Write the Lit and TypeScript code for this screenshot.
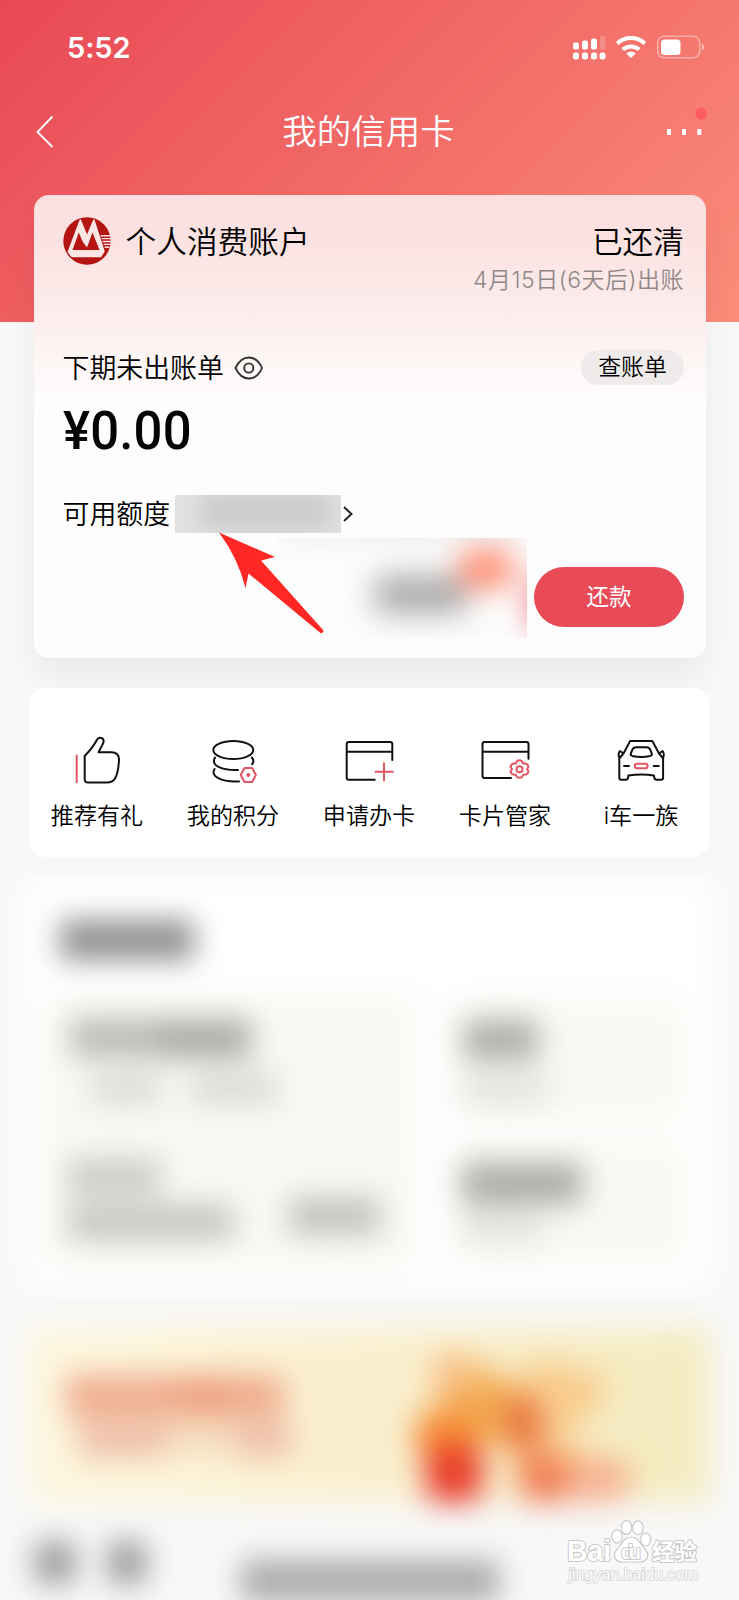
import { LitElement, html, css, svg } from 'lit';
import { customElement, property } from 'lit/decorators.js';

const thumb = svg`
  <path class="r" d="M9.700 25.500V52.300"/>
  <path d="M17.700 26V49q0 3.600 3.600 3.600H40c7.500 0 11-5.500 12-22.400.300-5.400-2.600-8-7.600-8H31.500L36.300 13c1.500-5.600-4.400-6.800-6.500-3C27 15.500 23 20.500 17.700 26z"/>`;
const coins = svg`
  <ellipse cx="30.300" cy="20" rx="20" ry="9.100"/>
  <path d="M12 27.500C7 36 20 40.600 35 40M48.800 27.500C51 30 51 32 49 34.300M11.600 39C7 46 18 52.500 36 51.400"/>
  <path class="r" d="M37.700 45l3.800-6.900h7.600l3.800 6.900-3.800 6.900h-7.600z"/>
  <circle class="rf" cx="45.300" cy="45" r="2"/>`;
const apply = svg`
  <path d="M35.700 49.700H9.700a2 2 0 0 1-2-2V14a2 2 0 0 1 2-2H51.300a2 2 0 0 1 2 2V30M7.700 21.700H53.300"/>
  <path class="r" d="M36.500 41.700h17.300M45 33.300v17.300"/>`;
const manage = svg`
  <path d="M36 48H9.500a2 2 0 0 1-2-2V14a2 2 0 0 1 2-2H51.500a2 2 0 0 1 2 2V28.800M7.500 21.700H53.500"/>
  <path class="r" d="M42 31.200q2.500-1.800 5 0l1.200 2.300 2.600.1q2.600 1 2.600 3.600l-1.400 1.800 1.400 2q0 2.600-2.600 3.600l-2.600.1L47 47q-2.500 1.600-5 0l-1.200-2.300-2.600-.1q-2.600-1-2.600-3.600l1.400-2-1.400-1.800q0-2.600 2.600-3.600l2.600-.1z"/>
  <circle class="r" cx="44.500" cy="39.200" r="3"/>`;
const car = svg`
  <path d="M8.300 27.500V47.700q0 2 2 2h4.500q2 0 2.300-2l.3-2.200q13-2 25.600 0l.3 2.200q.3 2 2.300 2h4.500q2 0 2-2V27.500M8.300 27.500q-1.500-3.500.2-6M52.100 27.500q1.500-3.500-.2-6M9 21l3.500 2.500L19.200 10.900H41.300L48 23.500 51.500 21M8.600 28l3.900-4.500M51.800 28L48 23.500"/>
  <path d="M25.500 17.300H35.500q2.800 0 3.700 2.300l1.600 4q.5 1.700-1.500 2.300-9 2-18 0-2-.6-1.500-2.300l1.600-4q.9-2.300 4.100-2.300z"/>
  <path d="M13 36h5M42.700 36h5"/>
  <rect class="r" x="23.800" y="33.800" width="12.800" height="4.400" rx="2.200"/>`;

@customElement('menu-item')
class MenuItem extends LitElement {
  @property() label = '';
  @property({ attribute: false }) icon: unknown;
  static styles = css`
    :host { display: flex; flex-direction: column; align-items: center; width: 136px; }
    svg { width: 60px; height: 60px; fill: none; stroke: #111; stroke-width: 2; stroke-linecap: round; stroke-linejoin: round; }
    .r { stroke: #e35563; }
    .rf { fill: #e35563; stroke: none; }
    .label { margin-top: 9px; font-size: 23.100px; line-height: 34px; color: #000; white-space: nowrap; }
  `;
  render() {
    return html`<svg viewBox="0 0 60 60">${this.icon}</svg><span class="label">${this.label}</span>`;
  }
}

@customElement('app-root')
class AppRoot extends LitElement {
  static styles = css`
    :host {
      display: block; position: relative; width: 739px; height: 1600px; overflow: hidden;
      background: linear-gradient(135deg, #e84855 0%, #f26c68 52%, #fb8c79 100%) 0 0 / 739px 322px no-repeat, #f8f8f8;
      font-family: "Inter", "Noto Sans CJK SC", sans-serif; font-weight: 350; color: #000;
    }
    * { box-sizing: border-box; }
    svg { display: block; overflow: visible; }
    filter { color-interpolation-filters: sRGB; }
    .status { height: 94px; padding: 0 35px 0 67px; display: flex; justify-content: space-between; align-items: center; }
    .time { color: #fff; font-size: 29px; font-weight: 600; letter-spacing: -.1px; line-height: 40px; padding-top: 2px; }
    .nav { height: 75px; padding: 0 32px 0 36px; display: grid; grid-template-columns: 60px 1fr 60px; align-items: center; }
    .title { text-align: center; color: #fff; font-size: 34.500px; line-height: 50px; padding-right: 6px; }
    .card {
      margin: 26px 33px 0 33.500px; height: 463px; border-radius: 15px; padding: 21px 22px 19px 29px;
      background: linear-gradient(180deg, #fbdfdf 0, #fbe3e2 50px, #fcefee 130px, #fdf8f7 175px, #fdfdfd 215px);
      box-shadow: 0 20px 32px rgba(0, 0, 0, .055); display: flex; flex-direction: column;
    }
    .card > * { flex-shrink: 0; }
    .head { display: flex; align-items: flex-start; height: 107px; }
    .name { margin-left: 14px; font-size: 30.700px; line-height: 52px; flex: 1; }
    .state { display: flex; flex-direction: column; align-items: flex-end; }
    .paid { font-size: 30.700px; line-height: 51px; }
    .due { font-size: 23px; line-height: 26px; color: #8f8888; letter-spacing: .5px; }
    .row { display: flex; align-items: center; }
    .bill { margin-top: 26px; height: 38px; justify-content: space-between; font-size: 26.900px; line-height: 38px; }
    .bill .row { gap: 10px; }
    .check { width: 103px; height: 35px; border-radius: 18px; background: #efebeb; font-size: 22.900px; line-height: 34px; text-align: center; margin-top: -1px; }
    .amount { margin-top: 13px; height: 62px; font: 500 53.500px/62px Roboto, sans-serif; color: #050505; transform: scaleX(.95); transform-origin: 0 0; letter-spacing: .2px; }
    .limit { margin-top: 33px; height: 38px; font-size: 26.900px; line-height: 38px; }
    .limit span { margin-top: -1px; }
    .mask { width: 166px; height: 38px; margin: 0 2px 0 5px; background: #e2e2e2; overflow: hidden; }
    .actions { margin-top: 5px; height: 100px; display: flex; justify-content: flex-end; gap: 7px; }
    .offer { width: 250px; height: 100px; overflow: hidden; }
    .pay { width: 150px; height: 60px; margin-top: 29px; border-radius: 30px; background: #e84a56; color: #fff; font-size: 22.500px; line-height: 59px; text-align: center; font-weight: 400; }
    .menu { margin: 30px 30px 0 29px; height: 169px; border-radius: 16px; background: #fff; display: flex; padding-top: 42px; position: relative; }
    .panel { margin-top: 17px; height: 426px; overflow: hidden; }
    .banner { height: 227px; }
    .arrow { position: absolute; left: 215px; top: 530px; }
    .mark { position: absolute; left: 560px; top: 1515px; }
    .mark text { fill: #fff; stroke: #c9c9c9; stroke-width: 2px; paint-order: stroke; stroke-linejoin: round; }
    .mark .url { stroke-width: 1.500px; stroke: #d0d0d0; }
    .mark .paw { fill: #fff; stroke: #c9c9c9; stroke-width: 1.200px; }
  `;

  render() {
    return html`
      <div class="status">
        <span class="time">5:52</span>
        <svg width="132" height="26" viewBox="572 33.500 132 26" fill="#fff">
          <rect x="573" y="42" width="6" height="7" rx="2"/><rect x="582" y="40" width="6" height="9" rx="2"/>
          <rect x="591" y="38" width="6" height="11" rx="2"/><rect x="600" y="35" width="5.500" height="14" rx="2" opacity=".2"/>
          <rect x="573" y="52" width="6" height="7" rx="2.300"/><rect x="582" y="52" width="6" height="7" rx="2.300"/>
          <rect x="591" y="52" width="6" height="7" rx="2.300"/><rect x="599.500" y="52" width="6" height="7" rx="2.300"/>
          <g fill="none" stroke="#fff" stroke-width="4">
            <path d="M617.200 43a20.300 20.300 0 0 1 27.600 0"/><path d="M622.800 49a12.400 12.400 0 0 1 16.400 0"/>
          </g>
          <path d="M631 57.500l-4.700-4.600q4.700-3.600 9.400 0z"/>
          <rect x="657.700" y="35.800" width="42" height="21.500" rx="6.500" fill="none" stroke="#fff" stroke-width="1.600" opacity=".4"/>
          <rect x="661" y="39" width="19.500" height="15.500" rx="3.500"/>
          <path d="M702 43q2.300 1 2.300 3.500t-2.300 3.500z" opacity=".5"/>
        </svg>
      </div>
      <div class="nav">
        <svg width="20" height="34" viewBox="0 0 20 34" fill="none" stroke="#fff" stroke-width="1.800"><path d="M16.500 1.500L1.500 17 16.500 32"/></svg>
        <div class="title">我的信用卡</div>
        <svg width="60" height="40" viewBox="647 112 60 40" fill="#fff">
          <rect x="667" y="129" width="4" height="6"/><rect x="682" y="129" width="4" height="6"/><rect x="697.300" y="129" width="4" height="6"/>
          <circle cx="701.300" cy="113.700" r="6" fill="#fe5d62"/>
        </svg>
      </div>

      <div class="card">
        <div class="head">
          <svg width="49" height="48" viewBox="0 0 49 48">
            <circle cx="24" cy="25" r="23.700" fill="#b41513"/>
            <path fill="#fbe5e5" d="M16.700 3.500h1.200L24 18.500 30.300 3.500h1.200L41.800 35.500 38 41.300H8.500L4.500 36z"/>
            <path fill="#b41513" d="M15.800 16.500L23.200 34H9.500zM29.500 16.500L36.500 34H23.200L19.800 25.700 24 31.500z"/>
            <path stroke="#fbe5e5" stroke-width="1.400" d="M37.500 19.700H47M38.500 22.600H48M39.500 25.500H48M40.600 28.400H47.500M41.600 31.300H46.500"/>
          </svg>
          <span class="name">个人消费账户</span>
          <div class="state"><span class="paid">已还清</span><span class="due">4月15日(6天后)出账</span></div>
        </div>
        <div class="row bill">
          <div class="row">
            <span>下期未出账单</span>
            <svg width="30" height="24" viewBox="0 0 30 24" fill="none" stroke="#333" stroke-width="1.900">
              <path d="M1.500 12C8-2 22-2 28 12 22 26 8 26 1.500 12z"/><circle cx="14.800" cy="12" r="4.600"/>
            </svg>
          </div>
          <div class="check">查账单</div>
        </div>
        <div class="amount">¥0.00</div>
        <div class="row limit">
          <span>可用额度</span>
          <div class="mask">
            <svg width="166" height="38"><filter id="m" filterUnits="userSpaceOnUse" x="-60" y="-80" width="290" height="200"><feGaussianBlur stdDeviation="12"/></filter>
              <rect x="26" y="-2" width="130" height="36" fill="#c9c9c9" filter="url(#m)"/></svg>
          </div>
          <svg width="10" height="18" viewBox="0 0 10 18" fill="none" stroke="#222" stroke-width="2"><path d="M1 2l7.500 7L1 16"/></svg>
        </div>
        <div class="actions">
          <div class="offer">
            <svg width="250" height="100">
              <filter id="o" filterUnits="userSpaceOnUse" x="-60" y="-60" width="370" height="220"><feGaussianBlur stdDeviation="15"/></filter>
              <rect width="250" height="100" fill="#fbfbfb" opacity=".5"/>
              <g filter="url(#o)">
                <rect x="98" y="38" width="92" height="37" rx="8" fill="#a8a8a8"/>
                <rect x="182" y="12" width="54" height="38" rx="10" fill="#ff8c70"/>
                <rect x="255" y="40" width="30" height="50" fill="#f05a68"/>
                <rect x="10" y="-28" width="230" height="20" fill="#dcdcdc"/>
              </g>
            </svg>
          </div>
          <div class="pay">还款</div>
        </div>
      </div>

      <div class="menu">
        <menu-item label="推荐有礼" .icon=${thumb}></menu-item>
        <menu-item label="我的积分" .icon=${coins}></menu-item>
        <menu-item label="申请办卡" .icon=${apply}></menu-item>
        <menu-item label="卡片管家" .icon=${manage}></menu-item>
        <menu-item label="i车一族" .icon=${car}></menu-item>
      </div>

      <div class="panel">
        <svg width="739" height="426" viewBox="0 874 739 426">
          <filter id="b" filterUnits="userSpaceOnUse" x="-50" y="800" width="840" height="600"><feGaussianBlur stdDeviation="17"/></filter>
          <filter id="b2" filterUnits="userSpaceOnUse" x="-50" y="800" width="840" height="600"><feGaussianBlur stdDeviation="14.500"/></filter>
          <g filter="url(#b)">
            <rect x="24" y="876" width="690" height="412" rx="14" fill="#fff"/>
            <g fill="#f9f8f3"><rect x="44" y="996" width="374" height="272"/><rect x="455" y="1000" width="230" height="120"/><rect x="455" y="1142" width="230" height="122"/></g>
          </g>
          <g filter="url(#b2)">
            <rect x="60" y="920" width="134" height="40" fill="#8f8f8f"/>
            <rect x="71" y="1019" width="86" height="38" fill="#bbbab5"/><rect x="157" y="1019" width="94" height="39" fill="#acaba6"/>
            <rect x="92" y="1074" width="68" height="29" fill="#dad9d5"/><rect x="191" y="1074" width="86" height="29" fill="#d9d8d4"/>
            <rect x="68" y="1160" width="92" height="34" fill="#cac9c4"/><rect x="69" y="1205" width="164" height="34" fill="#c5c4bf"/>
            <rect x="289" y="1198" width="91" height="36" fill="#c2c1bc"/>
            <rect x="464" y="1020" width="74" height="40" fill="#afaea9"/><rect x="464" y="1076" width="84" height="26" fill="#e2e1dd"/>
            <rect x="462" y="1163" width="120" height="41" fill="#adaca7"/><rect x="464" y="1212" width="77" height="28" fill="#e2e1dd"/>
          </g>
        </svg>
      </div>
      <div class="banner">
        <svg width="739" height="227" viewBox="0 1300 739 227">
          <defs><linearGradient id="g"><stop stop-color="#fdf7df"/><stop offset=".35" stop-color="#fbf1d2"/><stop offset=".7" stop-color="#f8edc8"/><stop offset="1" stop-color="#f3ebc0"/></linearGradient>
          <filter id="c" filterUnits="userSpaceOnUse" x="-50" y="1240" width="840" height="350"><feGaussianBlur stdDeviation="15"/></filter></defs>
          <g filter="url(#c)">
            <rect x="28" y="1328" width="682" height="174" fill="url(#g)"/>
            <rect x="66" y="1376" width="218" height="40" fill="#efa98c"/><rect x="180" y="1376" width="50" height="40" fill="#ec9d7d"/>
            <rect x="78" y="1422" width="88" height="34" fill="#eebda8"/><rect x="166" y="1420" width="70" height="32" fill="#f5dabd"/><rect x="236" y="1422" width="56" height="34" fill="#eebda8"/>
            <path d="M436 1354L468 1354 515 1385 536 1358 608 1378 600 1405 560 1440 640 1470 620 1498 530 1500 500 1440 425 1450z" fill="#f9cb8c"/>
            <rect x="436" y="1354" width="30" height="42" fill="#f8bd86"/>
            <ellipse cx="490" cy="1410" rx="38" ry="34" fill="#f2a951"/>
            <ellipse cx="524" cy="1424" rx="18" ry="28" fill="#e66f3c"/>
            <ellipse cx="446" cy="1436" rx="33" ry="27" fill="#f58c34"/>
            <rect x="426" y="1446" width="56" height="56" rx="14" fill="#e83b28"/>
            <rect x="520" y="1456" width="48" height="46" rx="14" fill="#f07a50"/>
            <rect x="566" y="1460" width="60" height="42" rx="10" fill="#f5b192"/>
          </g>
        </svg>
      </div>
      <div class="foot">
        <svg width="739" height="73" viewBox="0 1527 739 73">
          <filter id="d" filterUnits="userSpaceOnUse" x="-50" y="1450" width="840" height="250"><feGaussianBlur stdDeviation="14"/></filter>
          <g filter="url(#d)" fill="#a0a0a0"><rect x="34" y="1541" width="42" height="43" rx="6"/><rect x="107" y="1541" width="40" height="43" rx="6"/><rect x="241" y="1560" width="258" height="42" fill="#acacac"/></g>
        </svg>
      </div>

      <svg class="arrow" width="120" height="110" viewBox="215 530 120 110">
        <path fill="#ff2824" d="M219 532.500L275 557 261 560.500 323.500 630.500Q323.800 633.500 320.500 633L248.500 573.500 245.500 588Q238 558 219 532.500z"/>
      </svg>
      <svg class="mark" width="150" height="76" viewBox="560 1515 150 76">
        <text x="567" y="1560.500" font-family="Liberation Sans" font-size="29" font-weight="700" textLength="44" lengthAdjust="spacingAndGlyphs">Bai</text>
        <g class="paw">
          <ellipse cx="617" cy="1536.500" rx="5.200" ry="6.700"/><ellipse cx="626.500" cy="1527.500" rx="5.200" ry="7"/>
          <ellipse cx="638" cy="1527.800" rx="5.200" ry="7"/><ellipse cx="645.700" cy="1539.500" rx="5" ry="6.500"/>
          <path d="M631 1537c8 0 10 9 14.500 13 5 5 1 12-5.500 12h-18c-6.500 0-10-7-5.500-12 4.500-4 6.500-13 14.500-13z"/>
        </g>
        <text x="621" y="1559" font-family="Liberation Sans" font-size="20" font-weight="700" textLength="20">du</text>
        <text x="652" y="1559.500" font-family="Noto Sans CJK SC" font-size="22.500" font-weight="700" textLength="45">经验</text>
        <text class="url" x="568.500" y="1579.500" font-family="Liberation Sans" font-size="16" textLength="129">jingyan.baidu.com</text>
      </svg>`;
  }
}
